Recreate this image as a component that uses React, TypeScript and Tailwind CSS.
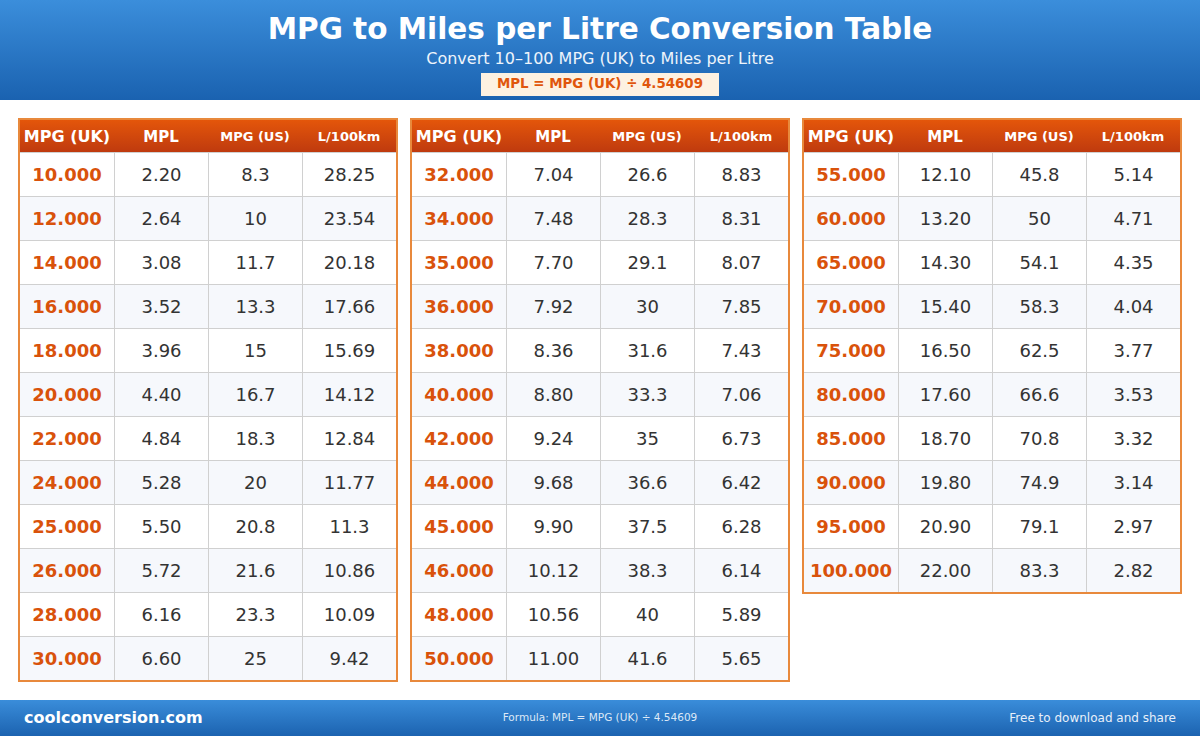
const font = { fontFamily: '"DejaVu Sans", "Liberation Sans", sans-serif' };

type Row = [string, string, string, string];

const tables: Row[][] = [
  [
    ["10.000", "2.20", "8.3", "28.25"],
    ["12.000", "2.64", "10", "23.54"],
    ["14.000", "3.08", "11.7", "20.18"],
    ["16.000", "3.52", "13.3", "17.66"],
    ["18.000", "3.96", "15", "15.69"],
    ["20.000", "4.40", "16.7", "14.12"],
    ["22.000", "4.84", "18.3", "12.84"],
    ["24.000", "5.28", "20", "11.77"],
    ["25.000", "5.50", "20.8", "11.3"],
    ["26.000", "5.72", "21.6", "10.86"],
    ["28.000", "6.16", "23.3", "10.09"],
    ["30.000", "6.60", "25", "9.42"],
  ],
  [
    ["32.000", "7.04", "26.6", "8.83"],
    ["34.000", "7.48", "28.3", "8.31"],
    ["35.000", "7.70", "29.1", "8.07"],
    ["36.000", "7.92", "30", "7.85"],
    ["38.000", "8.36", "31.6", "7.43"],
    ["40.000", "8.80", "33.3", "7.06"],
    ["42.000", "9.24", "35", "6.73"],
    ["44.000", "9.68", "36.6", "6.42"],
    ["45.000", "9.90", "37.5", "6.28"],
    ["46.000", "10.12", "38.3", "6.14"],
    ["48.000", "10.56", "40", "5.89"],
    ["50.000", "11.00", "41.6", "5.65"],
  ],
  [
    ["55.000", "12.10", "45.8", "5.14"],
    ["60.000", "13.20", "50", "4.71"],
    ["65.000", "14.30", "54.1", "4.35"],
    ["70.000", "15.40", "58.3", "4.04"],
    ["75.000", "16.50", "62.5", "3.77"],
    ["80.000", "17.60", "66.6", "3.53"],
    ["85.000", "18.70", "70.8", "3.32"],
    ["90.000", "19.80", "74.9", "3.14"],
    ["95.000", "20.90", "79.1", "2.97"],
    ["100.000", "22.00", "83.3", "2.82"],
  ],
];

const Table = ({ rows }: { rows: Row[] }) => (
  <div className="w-[380px] border-2 border-[#e8893c] self-start">
    <div className="grid grid-cols-4 h-8 bg-gradient-to-b from-[#e4560a] to-[#bf3a0e] text-white font-bold items-center text-center pt-[2px]">
      <div className="text-[16px]">MPG (UK)</div>
      <div className="text-[15px]">MPL</div>
      <div className="text-[13px]">MPG (US)</div>
      <div className="text-[13px]">L/100km</div>
    </div>
    {rows.map((r, i) => (
      <div
        key={r[0]}
        className={`grid grid-cols-4 h-11 text-[18px] text-center ${i % 2 ? "bg-[#f6f8fc]" : "bg-white"}`}
      >
        {r.map((c, j) => (
          <div
            key={j}
            className={`flex items-center justify-center border-t border-[#d0d0d0] ${j > 0 ? "border-l text-[#333333]" : "font-bold text-[#d9520b]"}`}
          >
            {c}
          </div>
        ))}
      </div>
    ))}
  </div>
);

export default function App() {
  return (
    <div className="w-[1200px] h-[736px] flex flex-col bg-white" style={font}>
      <header className="h-[100px] bg-gradient-to-b from-[#3b8edb] to-[#1a62b0] flex flex-col items-center text-white">
        <h1 className="text-[29.5px] font-bold leading-none mt-[15px]">MPG to Miles per Litre Conversion Table</h1>
        <p className="text-[16px] leading-none mt-[6px] text-[#eef4fb]">Convert 10–100 MPG (UK) to Miles per Litre</p>
        <div className="mt-[6px] w-[238px] h-[23px] bg-[#fdf1e1] text-[#e0560c] font-bold text-[13.4px] flex items-center justify-center">
          MPL = MPG (UK) ÷ 4.54609
        </div>
      </header>
      <main className="flex-1 flex gap-3 px-[18px] pt-[18px]">
        {tables.map((t, i) => (
          <Table key={i} rows={t} />
        ))}
      </main>
      <footer className="h-9 bg-gradient-to-b from-[#3a8dda] to-[#1c63b0] flex items-center justify-between px-6 text-white">
        <span className="text-[16px] font-bold w-[300px]">coolconversion.com</span>
        <span className="text-[10.5px] text-[#dde9f7]">Formula: MPL = MPG (UK) ÷ 4.54609</span>
        <span className="text-[12px] text-[#e8f0fa] w-[300px] text-right">Free to download and share</span>
      </footer>
    </div>
  );
}
